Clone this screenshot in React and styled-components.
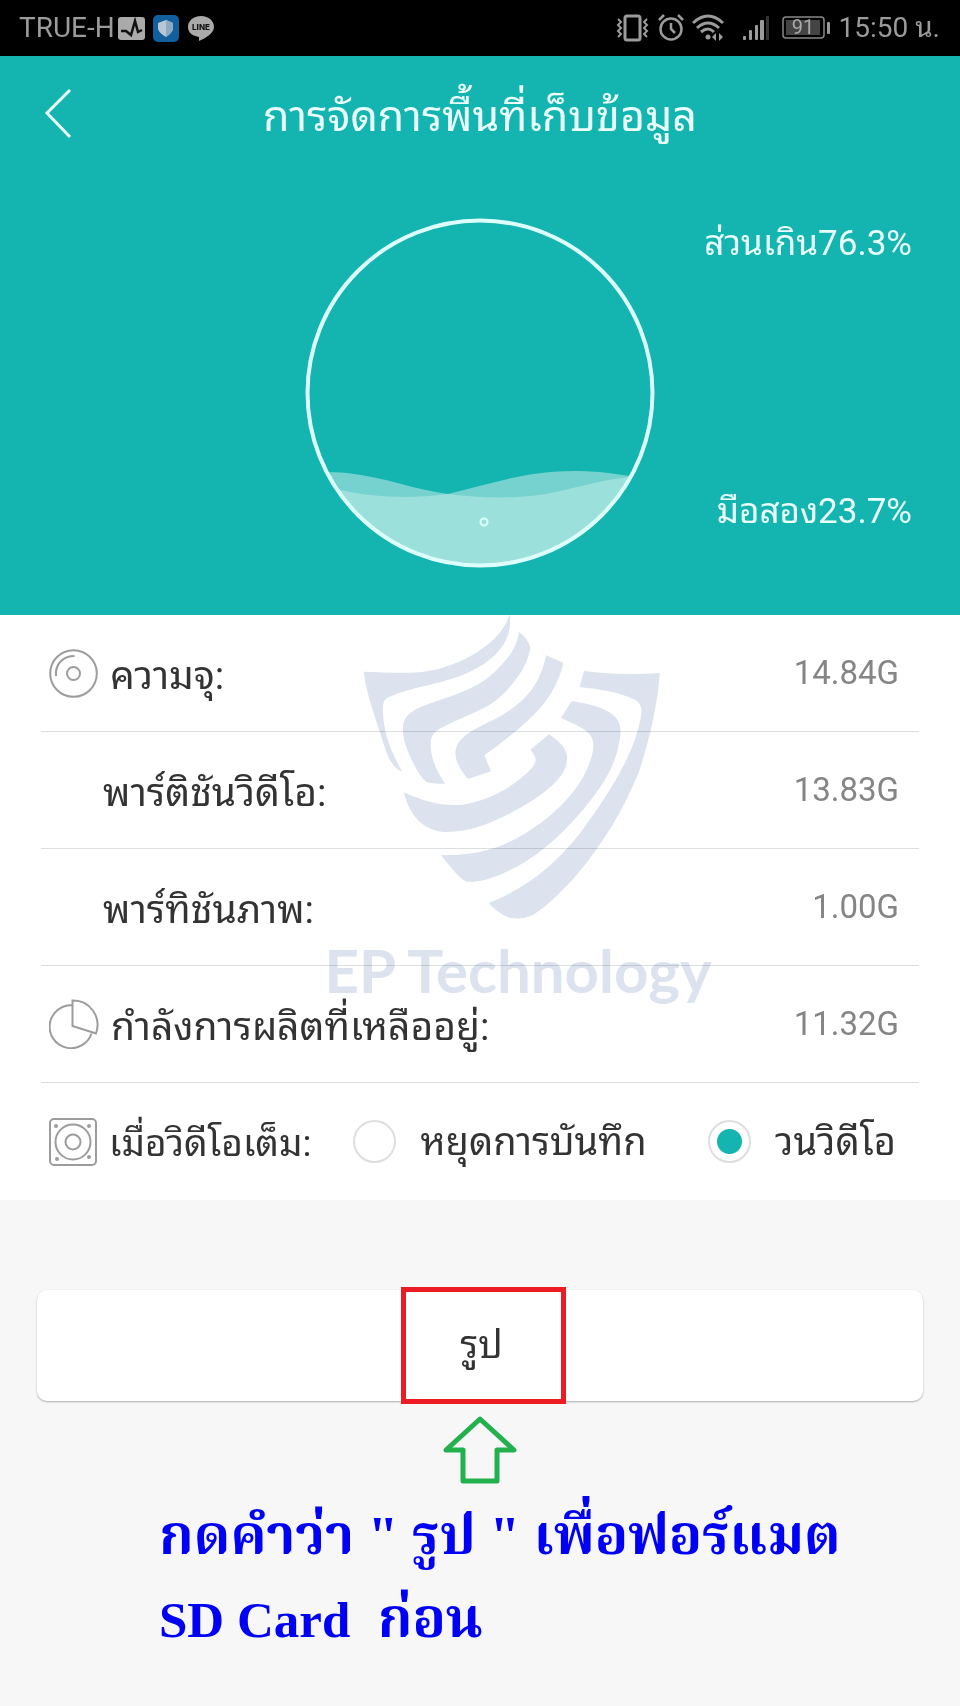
import React from "react";
import styled, { createGlobalStyle } from "styled-components";

const teal = "#14b5b1";
const ink = "#333";
const iconGrey = "#9c9c9c";
const statusGrey = "#9b9b9b";

const GlobalStyle = createGlobalStyle`
  *, *::before, *::after { box-sizing: border-box; }
  body {
    margin: 0;
    background: #f7f7f7;
    color: ${ink};
    font-family: Roboto, "Noto Sans Thai Looped", Loma, Waree, Garuda, "Droid Sans Thai", "Noto Sans Thai", sans-serif;
  }
`;

const Page = styled.div`
  min-height: 100vh;
  display: flex;
  flex-direction: column;
`;

const StatusBar = styled.div`
  height: 56px;
  padding: 0 20px 0 19px;
  display: flex;
  align-items: center;
  justify-content: space-between;
  background: #000;
  color: ${statusGrey};
  font-size: 28px;
  line-height: 36px;
`;

const StatusGroup = styled.div`
  display: flex;
  align-items: center;
  gap: 8px;
`;

const Carrier = styled.span`
  margin-right: -5px;
`;

const Hero = styled.header`
  background: ${teal};
  color: #eafffd;
`;

const TitleBar = styled.div`
  height: 116px;
  padding: 0 40px;
  display: grid;
  grid-template-columns: 64px 1fr 64px;
  align-items: center;
`;

const BackButton = styled.button`
  width: 40px;
  height: 56px;
  padding: 0;
  border: 0;
  background: none;
  color: inherit;
`;

const Title = styled.h1`
  margin: 0;
  padding-top: 4px;
  text-align: center;
  font-size: 43px;
  line-height: 56px;
  font-weight: 400;
  white-space: nowrap;
`;

const Usage = styled.div`
  padding: 46px 48px 47px;
  display: grid;
  grid-template-columns: 1fr 350px 1fr;
`;

const UsageLabels = styled.div`
  grid-column: 3;
  display: flex;
  flex-direction: column;
  justify-content: space-between;
  align-items: flex-end;
  padding: 2px 0 32px;
  font-size: 35px;
  line-height: 48px;
  white-space: nowrap;
`;

const GaugeBox = styled.div`
  grid-column: 2;
  display: flex;
`;

const Details = styled.main`
  position: relative;
  background: #fff;
`;

const List = styled.dl`
  margin: 0;
`;

const Row = styled.div`
  height: 117px;
  margin: 0 41px;
  padding: 0 20px 0 8px;
  display: flex;
  align-items: center;
  justify-content: space-between;
  gap: 40px;
  border-bottom: 1px solid #dcdfe0;
`;

const RowLabel = styled.dt`
  display: flex;
  align-items: center;
  gap: 12px;
  padding-left: ${(p) => (p.$indent ? 54 : 0)}px;
  font-size: 39px;
  line-height: 48px;
  white-space: nowrap;
`;

const LabelText = styled.span`
  padding-top: 5px;
`;

const RowValue = styled.dd`
  margin: 0;
  color: #858585;
  font-size: 33px;
  line-height: 48px;
`;

const Choices = styled.fieldset`
  height: 117px;
  margin: 0;
  border: 0;
  padding: 0 64px 0 49px;
  display: flex;
  align-items: center;
  gap: 42px;
  min-width: 0;
  font-size: 38px;
  line-height: 48px;
  white-space: nowrap;
`;

const ChoicesLabel = styled.div`
  display: flex;
  align-items: center;
  gap: 12px;
  font-size: 37px;
`;

const Choice = styled.label`
  display: flex;
  align-items: center;
  gap: 24px;
  &:last-child { margin-left: auto; }
`;

const Radio = styled.input`
  appearance: none;
  width: 43px;
  height: 43px;
  margin: 0;
  border: 2px solid #dedede;
  border-radius: 50%;
  background: #fff;
  &:checked {
    background: radial-gradient(circle, ${teal} 12px, #fff 13px);
  }
`;

const Watermark = styled.div`
  position: absolute;
  top: 0;
  left: 0;
  right: 0;
  padding-left: 76px;
  display: flex;
  flex-direction: column;
  align-items: center;
  color: #dce2ee;
  mix-blend-mode: multiply;
  pointer-events: none;
  font-family: Lato, sans-serif;
  font-weight: 700;
  font-size: 60px;
  line-height: 72px;
`;

const Mark = styled.svg`
  display: block;
  margin: 0 14px 14px 0;
`;

const Footer = styled.section`
  padding: 90px 37px 0;
`;

const FormatButton = styled.button`
  display: flex;
  align-items: center;
  justify-content: center;
  width: 100%;
  height: 111px;
  padding: 0;
  border: 0;
  border-radius: 10px;
  background: #fff;
  box-shadow: 0 1px 2px rgba(0, 0, 0, 0.3);
  color: ${ink};
  font: inherit;
  font-size: 38px;
  line-height: 48px;
`;

const Highlight = styled.span`
  flex: none;
  display: flex;
  align-items: center;
  justify-content: center;
  width: 165px;
  height: 117px;
  margin-left: 7px;
  padding: 0 4px 2px 0;
  border: 5px solid #ed1c24;
`;

const Pointer = styled.svg`
  display: block;
  margin: 15px auto 0;
`;

const Instruction = styled.p`
  margin: 10px 0 0;
  padding: 0 0 0 122px;
  color: #0000f5;
  font-family: "Liberation Serif", Norasi, Kinnari, "Noto Serif Thai", serif;
  font-weight: 700;
  font-size: 55px;
  line-height: 83px;
  white-space: pre-wrap;
`;

const Latin = styled.span`
  font-size: 51px;
`;

const DiscIcon = () => (
  <svg width="49" height="49" viewBox="0 0 49 49" fill="none" stroke={iconGrey} strokeWidth="2">
    <circle cx="24.5" cy="24.5" r="23.3" />
    <circle cx="24.5" cy="24.5" r="6.5" />
    <path d="M7 27C6 15 14 7 25.500 7" />
  </svg>
);

const PieIcon = () => (
  <svg width="50" height="50" viewBox="0 0 50 50" fill="none" stroke={iconGrey} strokeWidth="2">
    <path d="M23 6.200A21.500 21.500 0 1 0 42.500 34.500" />
    <path d="M23.500 1.500V27L47 34.500C53 17 40 1 23.500 1.500Z" />
  </svg>
);

const DriveIcon = () => (
  <svg width="48" height="48" viewBox="0 0 48 48" fill="none" stroke={iconGrey} strokeWidth="2">
    <rect x="1" y="1" width="46" height="46" rx="4" />
    <circle cx="24" cy="24" r="17.500" />
    <circle cx="24" cy="24" r="7.500" />
    <g fill={iconGrey} stroke="none">
      <circle cx="7" cy="8" r="2" />
      <circle cx="40" cy="8" r="2" />
      <circle cx="8" cy="41" r="2" />
      <circle cx="40" cy="39" r="2" />
    </g>
  </svg>
);

const Gauge = () => (
  <svg width="350" height="350" viewBox="0 0 350 350" role="img" aria-label="23.7%">
    <clipPath id="bowl">
      <circle cx="175" cy="175" r="173" />
    </clipPath>
    <g clipPath="url(#bowl)">
      <path
        fill="#76d2ce"
        d="M0 262C20 252 30 254 42 255C80 259 110 272 143 276C185 266 220 253 270 253C300 253 315 257 350 262V350H0Z"
      />
      <path
        fill="#9ce0dc"
        d="M0 262C15 264 25 269 36 272C75 281 110 280 143 276C180 281 220 281 250 274C280 268 300 260 350 256V350H0Z"
      />
    </g>
    <circle cx="175" cy="175" r="172.500" fill="none" stroke="#dcfffc" strokeWidth="4" />
    <circle cx="179" cy="304" r="3.500" fill="none" stroke="#dcfffc" strokeWidth="2" />
  </svg>
);

const ShieldMark = () => (
  <Mark width="298" height="305" viewBox="156 45 894 915" fill="currentColor" aria-hidden="true">
    <path d="M600 42C604 95 590 130 555 165C500 215 440 235 360 254C310 266 270 275 235 292Q219 300 219 320C217 390 240 450 277 516C250 502 236 480 225 445C200 360 170 290 161 215C230 217 300 222 350 214C450 198 570 135 600 42Z" />
    <path d="M627 95Q655 118 661 141C655 190 625 235 580 282C530 330 470 345 410 375C370 395 361 405 362 440C364 475 380 515 405 551Q370 552 348 545C325 525 300 475 285 430C270 370 280 345 330 322C410 290 490 275 550 220C595 175 620 145 627 95Z" />
    <path d="M708 166L760 188C750 235 725 285 690 325C640 380 585 420 523 466L543 514L474 537C450 510 430 475 438 445C450 405 500 385 560 355C640 310 690 260 708 166Z" />
    <path d="M822 213C900 224 975 223 1049 219C1045 300 1020 420 985 520C940 630 880 730 800 825C755 875 710 920 670 944C610 970 575 950 536 909C650 865 740 790 810 700C920 550 975 450 994 345Q998 310 975 299C925 275 870 268 809 261Z" />
    <path d="M785 303C840 312 890 325 915 350C938 375 933 405 925 440C910 510 870 570 810 640C740 720 670 780 590 815C540 838 500 848 470 845C450 838 420 800 393 765C480 767 550 752 620 715C710 665 780 600 820 530C845 480 855 445 848 420C840 390 800 375 753 354Z" />
    <path d="M717 403C750 425 777 450 770 485C765 530 720 565 670 600C580 655 490 700 400 696C340 690 300 650 281 577C340 605 400 620 460 614C540 600 600 565 650 520C675 495 690 480 661 450Z" />
  </Mark>
);

const RecorderBadge = () => (
  <svg width="27" height="23" viewBox="0 0 27 23">
    <rect width="27" height="23" rx="3" fill="#aaa" />
    <path d="M3 14H8L13 18L17 4L20 15L24 13" fill="none" stroke="#111" strokeWidth="2.500" />
  </svg>
);

const ShieldBadge = () => (
  <svg width="26" height="27" viewBox="0 0 26 27">
    <rect width="26" height="27" rx="5" fill="#125f9d" />
    <path d="M13 5L20 8V14Q19 18 13 22Q6 18 5 14V8Z" fill="#b9c7d4" />
    <path d="M13 5L20 8V14Q19 18 13 22Z" fill="#8fa9c0" />
  </svg>
);

const ChatBadge = () => (
  <svg width="28" height="27" viewBox="0 0 28 27">
    <path d="M14 1C6 1 1 6 1 12C1 18 6 21 12 22V26C19 23 27 18 27 12C27 6 22 1 14 1Z" fill="#aaa" />
    <text x="14" y="15" textAnchor="middle" fontFamily="Inter, sans-serif" fontWeight="800" fontSize="8" fill="#111">
      LINE
    </text>
  </svg>
);

const VibrateIcon = () => (
  <svg width="34" height="28" viewBox="0 0 34 28" fill="none" stroke={statusGrey} strokeWidth="3">
    <rect x="9" y="2" width="15" height="24" rx="2" />
    <path d="M2 5L5 8L2 11L5 14L2 17L5 20L2 23M31 5L28 8L31 11L28 14L31 17L28 20L31 23" strokeWidth="2" />
  </svg>
);

const AlarmIcon = () => (
  <svg width="26" height="28" viewBox="0 0 26 28" fill="none" stroke={statusGrey} strokeWidth="2.500">
    <circle cx="13" cy="15" r="10.500" />
    <path d="M13 9V15L17 19M1 6L6 1M25 6L20 1" />
  </svg>
);

const WifiIcon = () => (
  <svg width="42" height="28" viewBox="0 0 42 28" fill="none" stroke={statusGrey} strokeWidth="3">
    <path d="M1 9Q16 -5 31 9M5 14Q16 4 27 14M9 18Q16 12 22 18" />
    <circle cx="16" cy="23" r="2.500" fill={statusGrey} stroke="none" />
    <path d="M24 19V27L20 23ZM27 19V27L31 23Z" fill={statusGrey} stroke="none" />
  </svg>
);

const SignalIcon = () => (
  <svg width="32" height="26" viewBox="0 0 32 26" fill={statusGrey}>
    <rect x="1" y="21" width="3" height="4" rx="1" />
    <rect x="7" y="15" width="3" height="10" rx="1" />
    <rect x="13" y="10" width="3" height="15" rx="1" />
    <rect x="18" y="5" width="4" height="20" rx="1" />
    <rect x="24" y="1" width="3" height="24" fill="#333" />
  </svg>
);

const BatteryIcon = () => (
  <svg width="48" height="24" viewBox="0 0 48 24">
    <rect x="1" y="1" width="41" height="21" rx="3" fill="none" stroke="#888" strokeWidth="1.500" />
    <rect x="4" y="4" width="34" height="15" fill="#444" />
    <rect x="45" y="6" width="3" height="12" rx="1" fill="#999" />
    <text x="21" y="18" textAnchor="middle" fontFamily="Roboto, sans-serif" fontSize="20" fill="#aaa">
      91
    </text>
  </svg>
);

const rows = [
  { label: "ความจุ:", value: "14.84G", Icon: DiscIcon },
  { label: "พาร์ติชันวิดีโอ:", value: "13.83G" },
  { label: "พาร์ทิชันภาพ:", value: "1.00G" },
  { label: "กำลังการผลิตที่เหลืออยู่:", value: "11.32G", Icon: PieIcon },
];

export default function App() {
  return (
    <Page lang="th">
      <GlobalStyle />
      <StatusBar>
        <StatusGroup>
          <Carrier>TRUE-H</Carrier>
          <RecorderBadge />
          <ShieldBadge />
          <ChatBadge />
        </StatusGroup>
        <StatusGroup>
          <VibrateIcon />
          <AlarmIcon />
          <WifiIcon />
          <SignalIcon />
          <BatteryIcon />
          <span>15:50 น.</span>
        </StatusGroup>
      </StatusBar>

      <Hero>
        <TitleBar>
          <BackButton type="button" aria-label="ย้อนกลับ">
            <svg width="40" height="56" viewBox="0 0 40 56" fill="none" stroke="currentColor" strokeWidth="3">
              <path d="M30 4L7 27L30 51" />
            </svg>
          </BackButton>
          <Title>การจัดการพื้นที่เก็บข้อมูล</Title>
        </TitleBar>
        <Usage>
          <GaugeBox>
            <Gauge />
          </GaugeBox>
          <UsageLabels>
            <span>ส่วนเกิน76.3%</span>
            <span>มือสอง23.7%</span>
          </UsageLabels>
        </Usage>
      </Hero>

      <Details>
        <List>
          {rows.map(({ label, value, Icon }) => (
            <Row key={label}>
              <RowLabel $indent={!Icon}>
                {Icon && <Icon />}
                <LabelText>{label}</LabelText>
              </RowLabel>
              <RowValue>{value}</RowValue>
            </Row>
          ))}
        </List>
        <Choices aria-labelledby="when-full">
          <ChoicesLabel>
            <DriveIcon />
            <LabelText id="when-full">เมื่อวิดีโอเต็ม:</LabelText>
          </ChoicesLabel>
          <Choice>
            <Radio type="radio" name="when-full" value="stop" />
            หยุดการบันทึก
          </Choice>
          <Choice>
            <Radio type="radio" name="when-full" value="loop" defaultChecked />
            วนวิดีโอ
          </Choice>
        </Choices>
        <Watermark>
          <ShieldMark />
          <span>EP Technology</span>
        </Watermark>
      </Details>

      <Footer>
        <FormatButton type="button">
          <Highlight>รูป</Highlight>
        </FormatButton>
        <Pointer width="74" height="68" viewBox="0 0 74 68" fill="none" stroke="#22b14c" strokeWidth="5" strokeLinejoin="round">
          <path d="M37 3L71 34H54V65H20V34H3Z" />
        </Pointer>
        <Instruction>
          {'กดคำว่า " รูป " เพื่อฟอร์แมต\n'}
          <Latin>SD Card</Latin>
          {"  ก่อน"}
        </Instruction>
      </Footer>
    </Page>
  );
}
